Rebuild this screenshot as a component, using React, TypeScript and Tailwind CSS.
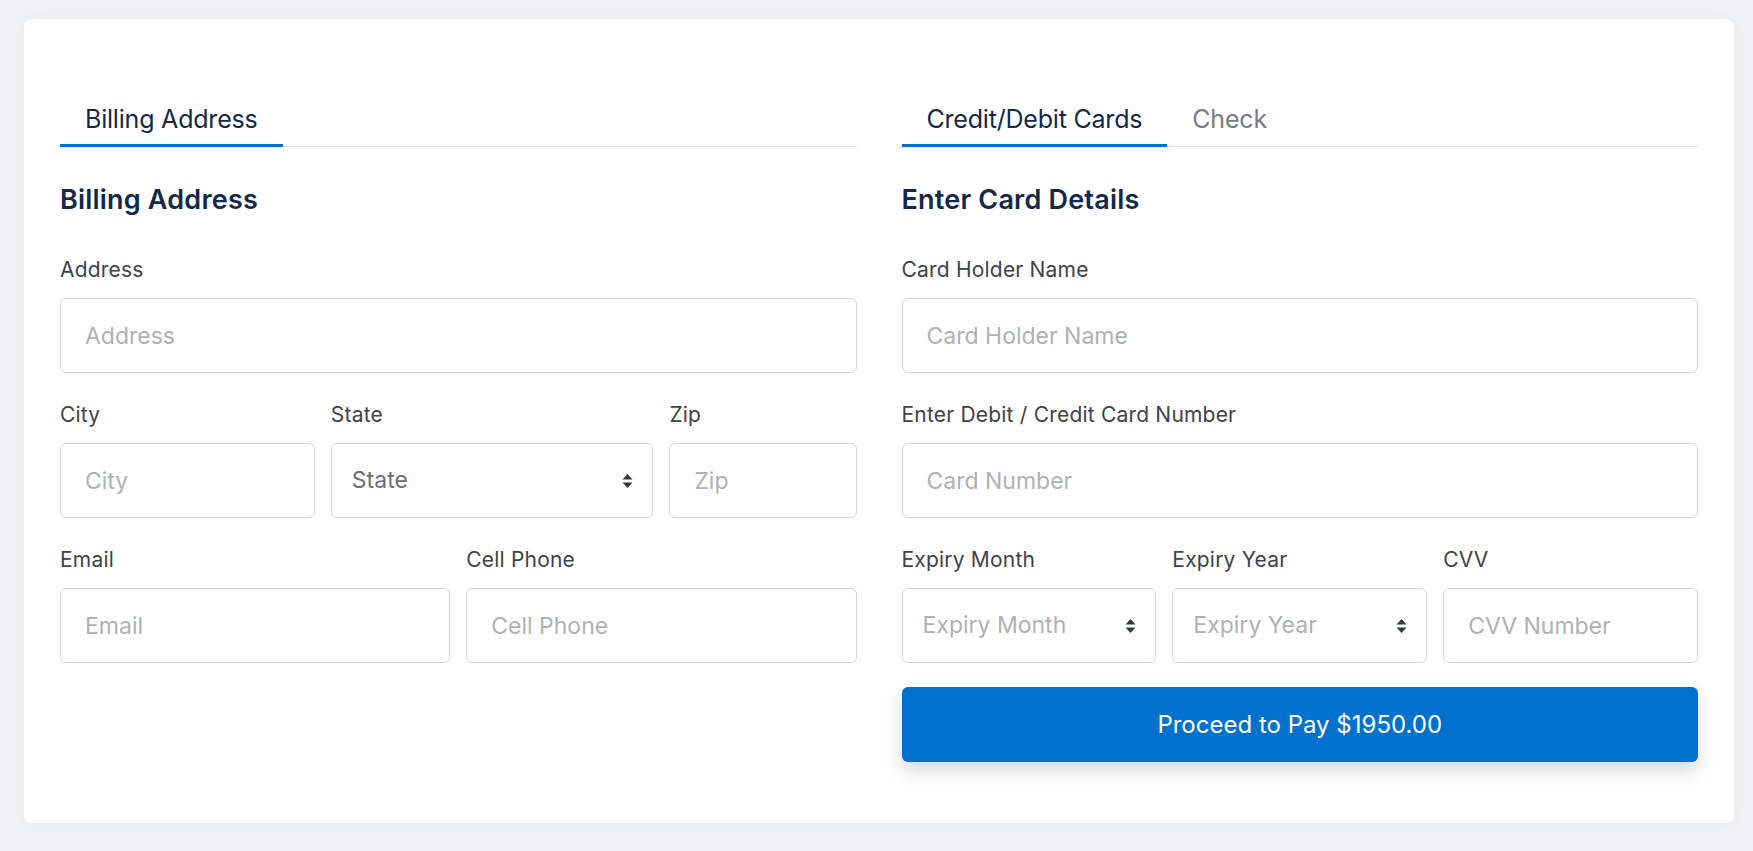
import { useState } from 'react'

// Sort-style double caret used inside the selects
function SelectCaret() {
  return (
    <svg width="11" height="15" viewBox="0 0 11 15" className="pointer-events-none absolute right-[20px] top-1/2 -translate-y-1/2">
      <path d="M5.5 0.5L10.5 6H0.5Z" fill="#343a40" />
      <path d="M5.5 14.5L10.5 9H0.5Z" fill="#343a40" />
    </svg>
  )
}

interface FieldProps {
  label: string
  placeholder: string
  className?: string
}

function TextField({ label, placeholder, className }: FieldProps) {
  return (
    <div className={className}>
      <label className="block text-[21px] leading-[28px] text-[#3e4349] tracking-[0.2px]">{label}</label>
      <input
        placeholder={placeholder}
        className="mt-[14px] h-[75px] w-full rounded-md border border-[#d4d6d9] bg-white px-[24px] text-[23px] text-[#3e4349] outline-none placeholder:text-[#aeb1b5]"
      />
    </div>
  )
}

function SelectField({ label, placeholder, className, dark }: FieldProps & { dark?: boolean }) {
  return (
    <div className={className}>
      <label className="block text-[21px] leading-[28px] text-[#3e4349] tracking-[0.2px]">{label}</label>
      <div className="relative mt-[14px]">
        <select
          defaultValue=""
          className={`h-[75px] w-full appearance-none rounded-md border border-[#d4d6d9] bg-white pl-[20px] pr-[44px] text-[23px] outline-none ${
            dark ? 'text-[#6a6f74]' : 'text-[#aeb1b5]'
          }`}
        >
          <option value="">{placeholder}</option>
        </select>
        <SelectCaret />
      </div>
    </div>
  )
}

function Tabs({ items, active, onChange }: { items: string[]; active: string; onChange: (t: string) => void }) {
  return (
    <div className="flex border-b border-[#dcdfe3]">
      {items.map((t) => (
        <button
          key={t}
          onClick={() => onChange(t)}
          className={`-mb-px border-b-[3px] px-[25px] pb-[7px] text-[25px] leading-[36px] tracking-[-0.2px] ${
            t === active ? 'border-[#0072ce] text-[#13294b]' : 'border-transparent text-[#787d83]'
          }`}
        >
          {t}
        </button>
      ))}
    </div>
  )
}

export default function App() {
  const [payTab, setPayTab] = useState('Credit/Debit Cards')

  return (
    <div className="min-h-screen bg-[#f2f3f5] pt-[19px] pb-[29px] pl-[24px] pr-[19px] font-['Inter',sans-serif]">
      <div className="rounded-lg bg-white px-[36px] pt-[82px] pb-[61px] shadow-[0_0_24px_rgba(0,0,0,0.05)]">
        <div className="grid grid-cols-2 gap-x-[45px]">
          {/* Billing address */}
          <div>
            <Tabs items={['Billing Address']} active="Billing Address" onChange={() => {}} />
            <h2 className="mt-[35px] text-[27px] leading-[36px] font-semibold text-[#13294b] tracking-[0.2px]">Billing Address</h2>
            <div className="mt-[38px] flex flex-col gap-[28px]">
              <TextField label="Address" placeholder="Address" />
              <div className="grid grid-cols-12 gap-x-[16px]">
                <TextField label="City" placeholder="City" className="col-span-4" />
                <SelectField label="State" placeholder="State" className="col-span-5" dark />
                <TextField label="Zip" placeholder="Zip" className="col-span-3" />
              </div>
              <div className="grid grid-cols-2 gap-x-[16px]">
                <TextField label="Email" placeholder="Email" />
                <TextField label="Cell Phone" placeholder="Cell Phone" />
              </div>
            </div>
          </div>

          {/* Payment */}
          <div>
            <Tabs items={['Credit/Debit Cards', 'Check']} active={payTab} onChange={setPayTab} />
            <h2 className="mt-[35px] text-[27px] leading-[36px] font-semibold text-[#13294b] tracking-[0.2px]">Enter Card Details</h2>
            <div className="mt-[38px] flex flex-col gap-[28px]">
              <TextField label="Card Holder Name" placeholder="Card Holder Name" />
              <TextField label="Enter Debit / Credit Card Number" placeholder="Card Number" />
              <div className="grid grid-cols-3 gap-x-[16px]">
                <SelectField label="Expiry Month" placeholder="Expiry Month" />
                <SelectField label="Expiry Year" placeholder="Expiry Year" />
                <TextField label="CVV" placeholder="CVV Number" />
              </div>
            </div>
            <button className="mt-[24px] h-[75px] w-full rounded-md bg-[#0072ce] text-[24px] text-white shadow-[0_8px_18px_rgba(0,0,0,0.16)]">
              Proceed to Pay $1950.00
            </button>
          </div>
        </div>
      </div>
    </div>
  )
}
